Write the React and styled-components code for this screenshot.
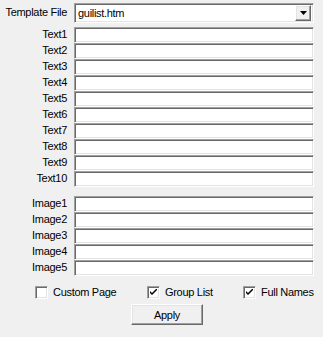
import React from "react";
import styled, { createGlobalStyle } from "styled-components";

const GlobalStyle = createGlobalStyle`
  html, body {
    margin: 0;
    padding: 0;
    background: #f0f0f0;
  }
  body {
    font-family: "Liberation Sans", Arial, sans-serif;
    font-size: 11px;
    letter-spacing: -0.3px;
    color: #000;
  }
`;

const Page = styled.div`
  width: 323px;
  height: 337px;
  background: #f0f0f0;
  padding-top: 3px;
  box-sizing: border-box;
`;

const Form = styled.div`
  display: grid;
  grid-template-columns: 67px 240px;
  column-gap: 7px;
`;

const Label = styled.div`
  text-align: right;
  height: ${(p) => p.h || 16}px;
  line-height: ${(p) => (p.h || 16) - 1}px;
  white-space: nowrap;
`;

const Sunken = styled.div`
  box-sizing: border-box;
  border: 1px solid;
  border-color: #a0a0a0 #fff #fff #a0a0a0;
  box-shadow: inset 1px 1px #696969, inset -1px -1px #e3e3e3;
  background: #fff;
`;

const Field = styled(Sunken)`
  height: 16px;
`;

const Combo = styled(Sunken)`
  height: 20px;
  display: flex;
  align-items: center;
  padding: 2px 2px 2px 3px;
  margin-bottom: 4px;
`;

const ComboText = styled.span`
  flex: 1;
  line-height: 14px;
`;

const Raised = styled.div`
  box-sizing: border-box;
  background: #f0f0f0;
  border: 1px solid;
  border-color: #fff #696969 #696969 #fff;
  box-shadow: inset -1px -1px #a0a0a0, inset 1px 1px #e3e3e3;
`;

const DropButton = styled(Raised)`
  width: 16px;
  height: 16px;
  display: flex;
  align-items: center;
  justify-content: center;
`;

const Spacer = styled.div`
  grid-column: 1 / span 2;
  height: 9px;
`;

const Checks = styled.div`
  display: grid;
  grid-template-columns: 112px 96px auto;
  padding-left: 35px;
  margin-top: 10px;
  height: 13px;
`;

const CheckItem = styled.label`
  display: flex;
  align-items: center;
  gap: 5px;
  height: 13px;
  line-height: 13px;
  white-space: nowrap;
`;

const Box = styled(Sunken)`
  width: 13px;
  height: 13px;
  display: flex;
  align-items: center;
  justify-content: center;
`;

const ApplyButton = styled(Raised)`
  margin: 5px 0 0 131px;
  width: 72px;
  height: 21px;
  display: flex;
  align-items: center;
  justify-content: center;
`;

const Check = ({ label, checked }) => (
  <CheckItem>
    <Box>
      {checked && (
        <svg width="7" height="7" viewBox="0 0 7 7">
          <path d="M0 2 L0 4 L2 6 L7 1 L7 -1 L2 4 Z" fill="#000" />
        </svg>
      )}
    </Box>
    {label}
  </CheckItem>
);

const texts = ["Text1", "Text2", "Text3", "Text4", "Text5", "Text6", "Text7", "Text8", "Text9", "Text10"];
const images = ["Image1", "Image2", "Image3", "Image4", "Image5"];

export default function App() {
  return (
    <Page>
      <GlobalStyle />
      <Form>
        <Label h={20}>Template File</Label>
        <Combo>
          <ComboText>guilist.htm</ComboText>
          <DropButton>
            <svg width="7" height="4" viewBox="0 0 7 4">
              <path d="M0 0 H7 L3.5 4 Z" fill="#000" />
            </svg>
          </DropButton>
        </Combo>
        {texts.map((t) => (
          <React.Fragment key={t}>
            <Label>{t}</Label>
            <Field />
          </React.Fragment>
        ))}
        <Spacer />
        {images.map((t) => (
          <React.Fragment key={t}>
            <Label>{t}</Label>
            <Field />
          </React.Fragment>
        ))}
      </Form>
      <Checks>
        <Check label="Custom Page" />
        <Check label="Group List" checked />
        <Check label="Full Names" checked />
      </Checks>
      <ApplyButton>Apply</ApplyButton>
    </Page>
  );
}
